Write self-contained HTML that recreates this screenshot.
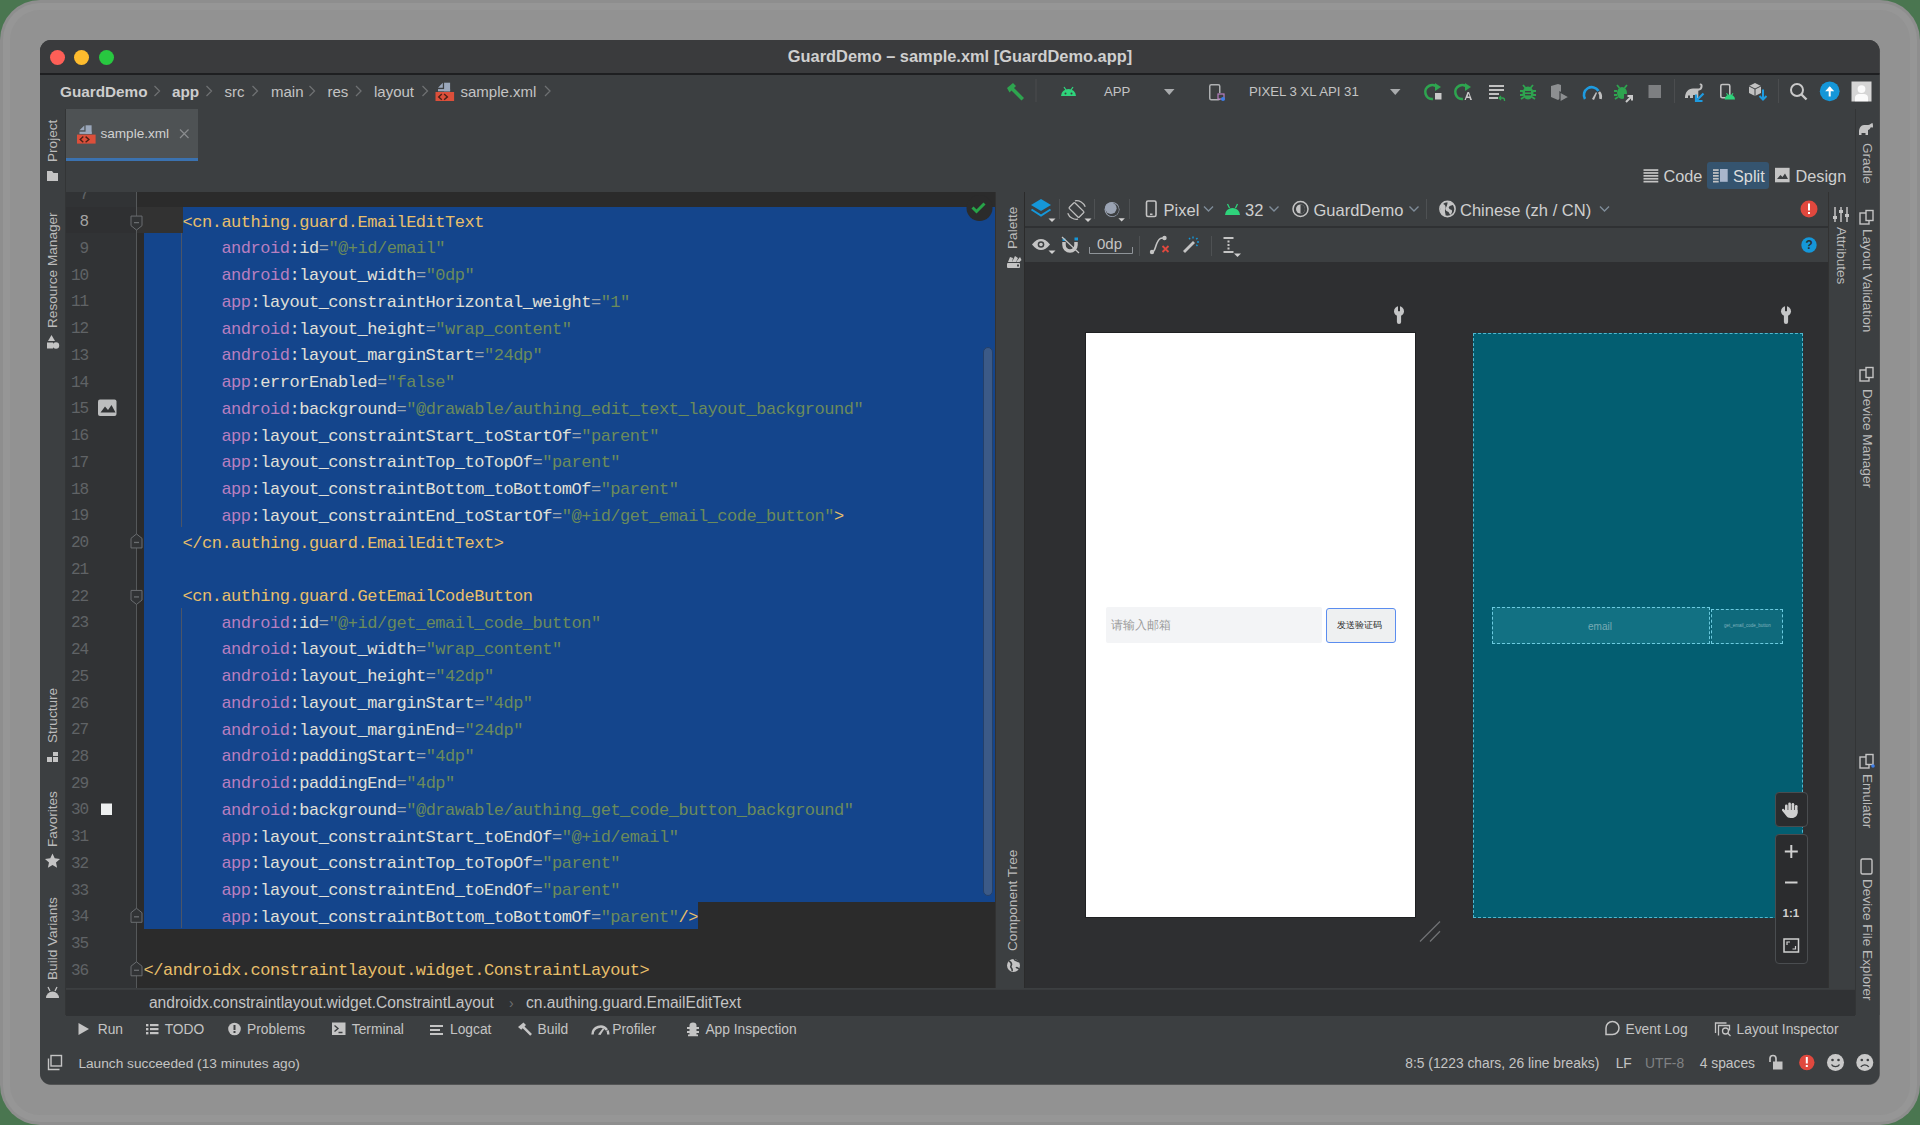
<!DOCTYPE html>
<html><head><meta charset="utf-8">
<style>
*{margin:0;padding:0;box-sizing:border-box}
html,body{width:1920px;height:1125px;overflow:hidden;background:#4a7650;font-family:"Liberation Sans",sans-serif}
.a{position:absolute}
.bgr{position:absolute}
#shadow{position:absolute;left:39.5px;top:39.5px;width:1840.5px;height:1045.5px;border-radius:11.5px;background:#6a6a6a}
#root{position:absolute;left:0;top:0;width:1920px;height:1125px;clip-path:inset(40px 40.5px 40.5px 40px round 11px);background:#3c3f41}
.t{position:absolute;white-space:nowrap;color:#bbbbbb;font-size:14px;line-height:1}
svg{position:absolute;overflow:visible}
#code{position:absolute;left:143.6px;top:183px;font-family:"Liberation Mono",monospace;font-size:17px;letter-spacing:-0.478px;color:#a9b7c6}
.ln{height:26.74px;line-height:26.74px;white-space:pre}
.tag{color:#e8bf6a}.ns{color:#b87fc0}.c{color:#e0e0d8}.at{color:#e0e0d8}.eq{color:#9aa3b0}.v{color:#6b8b5b}
.num{position:absolute;left:66px;width:21.8px;text-align:right;font-family:"Liberation Mono",monospace;font-size:16px;letter-spacing:-1.2px;color:#606366;line-height:26.74px}
.vt{position:absolute;white-space:nowrap;color:#bbbbbb;font-size:13px;line-height:1;transform-origin:0 0;transform:rotate(-90deg)}
</style></head>
<body>
<div class="bgr" style="left:0;top:0;width:1920px;height:1125px;border-radius:40px;background:#8e8e8e"></div>
<div class="bgr" style="left:3px;top:3px;width:1914px;height:1119px;border-radius:37px;background:#969696"></div>
<div class="bgr" style="left:10px;top:10px;width:1900px;height:1105px;border-radius:30px;background:#929292"></div>
<div id="shadow"></div>
<div id="root">
<!-- toolbar bg -->
<div class="a" style="left:40px;top:75px;width:1840px;height:34px;background:#3c3f41"></div>
<!-- left strip -->
<div class="a" style="left:40px;top:109px;width:26px;height:906px;background:#3c3f41"></div>
<div class="a" style="left:65px;top:109px;width:1px;height:906px;background:#333536"></div>
<!-- tab -->
<div class="a" style="left:66px;top:109px;width:132px;height:49px;background:#4e5254"></div>
<div class="a" style="left:66px;top:158px;width:132px;height:3px;background:#3b72b0"></div>
<!-- editor -->
<div class="a" style="left:66px;top:192px;width:929px;height:796px;background:#2b2b2b"></div>
<div class="a" style="left:66px;top:192px;width:70px;height:796px;background:#313335"></div>
<!-- current line -->
<div class="a" style="left:66px;top:206.7px;width:70px;height:26.74px;background:#2f3032"></div>
<div class="a" style="left:137px;top:206.7px;width:46px;height:26.74px;background:#323232"></div>
<!-- selection -->
<div class="a" style="left:183px;top:206.7px;width:812px;height:26.74px;background:#14458c"></div>
<div class="a" style="left:144px;top:233.44px;width:851px;height:668.5px;background:#14458c"></div>
<div class="a" style="left:144px;top:901.9px;width:554.4px;height:26.74px;background:#14458c"></div>
<!-- fold line -->
<div class="a" style="left:136px;top:192px;width:1px;height:796px;background:#55585a"></div>
<!-- indent guide -->
<div class="a" style="left:180.5px;top:233.4px;width:1px;height:294px;background:#4b5568"></div>
<div class="a" style="left:180.5px;top:608px;width:1px;height:320px;background:#4b5568"></div>
<div id="code"><div class="ln"></div><div class="ln">    <span class="tag">&lt;cn.authing.guard.EmailEditText</span></div><div class="ln">        <span class="ns">android</span><span class="c">:</span><span class="at">id</span><span class="eq">=</span><span class="v">&quot;@+id/email&quot;</span></div><div class="ln">        <span class="ns">android</span><span class="c">:</span><span class="at">layout_width</span><span class="eq">=</span><span class="v">&quot;0dp&quot;</span></div><div class="ln">        <span class="ns">app</span><span class="c">:</span><span class="at">layout_constraintHorizontal_weight</span><span class="eq">=</span><span class="v">&quot;1&quot;</span></div><div class="ln">        <span class="ns">android</span><span class="c">:</span><span class="at">layout_height</span><span class="eq">=</span><span class="v">&quot;wrap_content&quot;</span></div><div class="ln">        <span class="ns">android</span><span class="c">:</span><span class="at">layout_marginStart</span><span class="eq">=</span><span class="v">&quot;24dp&quot;</span></div><div class="ln">        <span class="ns">app</span><span class="c">:</span><span class="at">errorEnabled</span><span class="eq">=</span><span class="v">&quot;false&quot;</span></div><div class="ln">        <span class="ns">android</span><span class="c">:</span><span class="at">background</span><span class="eq">=</span><span class="v">&quot;@drawable/authing_edit_text_layout_background&quot;</span></div><div class="ln">        <span class="ns">app</span><span class="c">:</span><span class="at">layout_constraintStart_toStartOf</span><span class="eq">=</span><span class="v">&quot;parent&quot;</span></div><div class="ln">        <span class="ns">app</span><span class="c">:</span><span class="at">layout_constraintTop_toTopOf</span><span class="eq">=</span><span class="v">&quot;parent&quot;</span></div><div class="ln">        <span class="ns">app</span><span class="c">:</span><span class="at">layout_constraintBottom_toBottomOf</span><span class="eq">=</span><span class="v">&quot;parent&quot;</span></div><div class="ln">        <span class="ns">app</span><span class="c">:</span><span class="at">layout_constraintEnd_toStartOf</span><span class="eq">=</span><span class="v">&quot;@+id/get_email_code_button&quot;</span><span class="tag">&gt;</span></div><div class="ln">    <span class="tag">&lt;/cn.authing.guard.EmailEditText&gt;</span></div><div class="ln"></div><div class="ln">    <span class="tag">&lt;cn.authing.guard.GetEmailCodeButton</span></div><div class="ln">        <span class="ns">android</span><span class="c">:</span><span class="at">id</span><span class="eq">=</span><span class="v">&quot;@+id/get_email_code_button&quot;</span></div><div class="ln">        <span class="ns">android</span><span class="c">:</span><span class="at">layout_width</span><span class="eq">=</span><span class="v">&quot;wrap_content&quot;</span></div><div class="ln">        <span class="ns">android</span><span class="c">:</span><span class="at">layout_height</span><span class="eq">=</span><span class="v">&quot;42dp&quot;</span></div><div class="ln">        <span class="ns">android</span><span class="c">:</span><span class="at">layout_marginStart</span><span class="eq">=</span><span class="v">&quot;4dp&quot;</span></div><div class="ln">        <span class="ns">android</span><span class="c">:</span><span class="at">layout_marginEnd</span><span class="eq">=</span><span class="v">&quot;24dp&quot;</span></div><div class="ln">        <span class="ns">android</span><span class="c">:</span><span class="at">paddingStart</span><span class="eq">=</span><span class="v">&quot;4dp&quot;</span></div><div class="ln">        <span class="ns">android</span><span class="c">:</span><span class="at">paddingEnd</span><span class="eq">=</span><span class="v">&quot;4dp&quot;</span></div><div class="ln">        <span class="ns">android</span><span class="c">:</span><span class="at">background</span><span class="eq">=</span><span class="v">&quot;@drawable/authing_get_code_button_background&quot;</span></div><div class="ln">        <span class="ns">app</span><span class="c">:</span><span class="at">layout_constraintStart_toEndOf</span><span class="eq">=</span><span class="v">&quot;@+id/email&quot;</span></div><div class="ln">        <span class="ns">app</span><span class="c">:</span><span class="at">layout_constraintTop_toTopOf</span><span class="eq">=</span><span class="v">&quot;parent&quot;</span></div><div class="ln">        <span class="ns">app</span><span class="c">:</span><span class="at">layout_constraintEnd_toEndOf</span><span class="eq">=</span><span class="v">&quot;parent&quot;</span></div><div class="ln">        <span class="ns">app</span><span class="c">:</span><span class="at">layout_constraintBottom_toBottomOf</span><span class="eq">=</span><span class="v">&quot;parent&quot;</span><span class="tag">/&gt;</span></div><div class="ln"></div><div class="ln"><span class="tag">&lt;/androidx.constraintlayout.widget.ConstraintLayout&gt;</span></div></div>
<!-- palette strip -->
<div class="a" style="left:995px;top:192px;width:30px;height:796px;background:#3c3f41"></div>
<div class="a" style="left:995px;top:192px;width:1px;height:796px;background:#323232"></div>
<div class="a" style="left:1024px;top:192px;width:1px;height:796px;background:#2b2b2b"></div>
<!-- design panel -->
<div class="a" style="left:1025px;top:192px;width:803px;height:796px;background:#2e2f31"></div>
<div class="a" style="left:1025px;top:192px;width:803px;height:34px;background:#3c3f41"></div>
<div class="a" style="left:1025px;top:226px;width:803px;height:2px;background:#2f3133"></div>
<div class="a" style="left:1025px;top:228px;width:803px;height:34px;background:#3c3f41"></div>
<!-- attributes strip -->
<div class="a" style="left:1828px;top:192px;width:27px;height:796px;background:#3c3f41"></div>
<div class="a" style="left:1828px;top:192px;width:1px;height:796px;background:#323232"></div>
<!-- right strip -->
<div class="a" style="left:1855px;top:109px;width:25px;height:906px;background:#3c3f41"></div>
<div class="a" style="left:1855px;top:109px;width:1px;height:906px;background:#333536"></div>
<!-- bottom breadcrumb -->
<div class="a" style="left:66px;top:988.5px;width:1789px;height:27px;background:#303234"></div>
<div class="a" style="left:66px;top:988.5px;width:1789px;height:1px;background:#3a3c3e"></div>

<!-- title bar -->
<div class="a" style="left:40px;top:40px;width:1840px;height:34px;background:#3a3b3d"></div>
<div class="a" style="left:40px;top:73px;width:1840px;height:2px;background:#1e1f21"></div>
<div class="a" style="left:50px;top:50px;width:15px;height:15px;border-radius:50%;background:#fe5f57"></div>
<div class="a" style="left:74px;top:50px;width:15px;height:15px;border-radius:50%;background:#febc2e"></div>
<div class="a" style="left:99px;top:50px;width:15px;height:15px;border-radius:50%;background:#28c840"></div>
<div class="t" style="left:0;width:1920px;top:48px;text-align:center;font-size:16.4px;font-weight:bold;color:#cfcfcf">GuardDemo – sample.xml [GuardDemo.app]</div>
<!-- nav bar -->
<div class="t" style="left:60px;top:84px;font-size:15.3px;font-weight:bold;color:#cdcdcd">GuardDemo</div>
<div class="t" style="left:172px;top:84px;font-size:15.3px;font-weight:bold;color:#cdcdcd">app</div>
<div class="t" style="left:224.5px;top:84px;font-size:15px;color:#c4c4c4">src</div>
<div class="t" style="left:271px;top:84px;font-size:15px;color:#c4c4c4">main</div>
<div class="t" style="left:327.5px;top:84px;font-size:15px;color:#c4c4c4">res</div>
<div class="t" style="left:374px;top:84px;font-size:15px;color:#c4c4c4">layout</div>
<div class="t" style="left:460.5px;top:84px;font-size:15px;color:#c4c4c4">sample.xml</div>
<svg style="left:0;top:0" width="1" height="1">
 <g stroke="#6e7072" stroke-width="1.3" fill="none">
  <path d="M154.5 86l5 5-5 5M206.5 86l5 5-5 5M252.5 86l5 5-5 5M309.5 86l5 5-5 5M356 86l5 5-5 5M422.5 86l5 5-5 5M545 86l5 5-5 5"/>
 </g>
 <!-- xml file icon -->
 <g transform="translate(435.5,82.7)"><rect x="8.6" y="0" width="6" height="8.6" fill="#9aa7bb"/><rect x="2.5" y="6.4" width="12.1" height="2.2" fill="#9aa7bb"/><path d="M2.5 5L7.3 0.1V5z" fill="#9aa7bb"/><rect x="0" y="9.3" width="18.6" height="9" fill="#dc4f3a"/><path d="M6.3 11.3L3.2 14.2 6.3 17M8.6 11.3l3.3 2.9-3.3 2.8" stroke="#4a2218" stroke-width="1.4" fill="none"/></g>
</svg>
<!-- right toolbar icons -->
<svg style="left:0;top:0" width="1" height="1">
 <!-- hammer -->
 <g transform="translate(1006,82)"><path d="M1 6l6-5 3 3-2 2 10 10-2.5 2.5-10-10-2 2z" fill="#2ea44f"/></g>
 <rect x="1035.5" y="79" width="1" height="23" fill="#4b4d4f"/>
 <!-- android -->
 <g transform="translate(1061,84)"><path d="M0 12a7.5 7 0 0 1 15 0z" fill="#2fd37b"/><path d="M3 3l2 3M12 3l-2 3" stroke="#2fd37b" stroke-width="1.3"/><circle cx="4.5" cy="9.5" r="1" fill="#3c3f41"/><circle cx="10.5" cy="9.5" r="1" fill="#3c3f41"/></g>
 <path d="M1164 89h10.5l-5.25 6z" fill="#a9abad"/>
 <!-- device icon -->
 <g transform="translate(1209,84)"><rect x="0.75" y="0.75" width="10" height="15" rx="1.5" fill="none" stroke="#aeb0b2" stroke-width="1.5"/><rect x="8" y="9" width="7" height="6" fill="#3c3f41"/><rect x="9" y="10" width="6" height="5" fill="none" stroke="#b87fc0" stroke-width="1.2"/><circle cx="14" cy="15" r="2" fill="#3d7ee8"/></g>
 <path d="M1390 89h10.5l-5.25 6z" fill="#a9abad"/>
 <!-- rerun icons -->
 <g transform="translate(1425,82)"><path d="M13 6A7 7 0 1 0 8 17" stroke="#2ea44f" stroke-width="2.6" fill="none"/><path d="M10 1l6 4-6 4z" fill="#2ea44f"/><rect x="10" y="11" width="6.5" height="6.5" fill="#c9c9c9"/></g>
 <g transform="translate(1455,82)"><path d="M13 6A7 7 0 1 0 8 17" stroke="#2ea44f" stroke-width="2.6" fill="none"/><path d="M10 1l6 4-6 4z" fill="#2ea44f"/><path d="M9.5 18l3-8h1.5l3 8h-1.8l-.7-2h-3l-.7 2zM12.6 14.5h2l-1-3z" fill="#c9c9c9"/></g>
 <!-- apply changes list -->
 <g transform="translate(1489,85)" fill="#c1c1c1"><rect x="0" y="0" width="15" height="2"/><rect x="0" y="4" width="15" height="2"/><rect x="0" y="8" width="10" height="2"/><rect x="0" y="12" width="9" height="2"/><path d="M12 11l-2 2 2 2M10.5 13h3a2 2 0 0 1 2 2v1" stroke="#2ea44f" stroke-width="1.3" fill="none"/></g>
 <!-- debug bug -->
 <g transform="translate(1520,83)" fill="#2ea44f"><ellipse cx="8" cy="10" rx="5.5" ry="6.5"/><path d="M3 2l2.5 3M13 2l-2.5 3M0 8h3M13 8h3M0 12h3M13 12h3M1 16l3-2M15 16l-3-2" stroke="#2ea44f" stroke-width="1.8"/><rect x="5" y="8" width="6" height="1.4" fill="#3c3f41"/><rect x="5" y="11" width="6" height="1.4" fill="#3c3f41"/></g>
 <!-- shield play -->
 <g transform="translate(1551,84)"><path d="M0 2l7-2 3 1v13l-3 2-7-3z" fill="#8d8f91"/><path d="M9 8l9 5-9 5z" fill="#8d8f91" stroke="#3c3f41" stroke-width="1.2"/></g>
 <!-- profiler gauge -->
 <g transform="translate(1583,85)"><path d="M2 14A7.5 7.5 0 0 1 15.5 6" stroke="#1e9be0" stroke-width="2.6" fill="none"/><path d="M16 7a7.5 7.5 0 0 1 1.5 7" stroke="#bfbfbf" stroke-width="2.6" fill="none"/><path d="M9 14l4-7 1 1-3 7z" fill="#bfbfbf"/></g>
 <!-- attach debugger -->
 <g transform="translate(1615,83)" fill="#2ea44f"><ellipse cx="7" cy="10" rx="5" ry="6"/><path d="M2 2l2.5 3M12 2l-2.5 3M-1 8h3M-1 12h3M0 16l3-2" stroke="#2ea44f" stroke-width="1.8"/><path d="M9 11h9v9H9z" fill="#3c3f41"/><path d="M11 19l6-6M12.5 13H17v4.5" stroke="#c9c9c9" stroke-width="2" fill="none"/></g>
 <!-- stop -->
 <rect x="1648.5" y="85" width="12.5" height="13" fill="#7d7f81"/>
 <rect x="1674" y="79" width="1" height="24" fill="#4b4d4f"/>
 <!-- gradle sync -->
 <g transform="translate(1685,83)">
  <path d="M0.5 15.5c0-5 2.5-9 7-9.5 3-.3 5 .5 7 0 1.5-.4 2-1.5 2-3 0-1.2-1-1.6-1.6-1.2M0.5 15.5h3v-2.5h3v2.5h2.5v-3h3" fill="none" stroke="#c1c1c1" stroke-width="0"/>
  <path d="M0 15c0-5.5 3-9.5 8-9.5h5c1.6 0 2.6-1 2.6-2.6 0-.9-.6-1.4-1.2-1.1l.6-1.3c1.6-.4 2.6.8 2.6 2.4 0 2.8-1.8 4.6-4.3 4.8V15h-2.6v-3H8v3H5v-2.5H3V15z" fill="#c1c1c1"/>
  <path d="M18.5 10.5l-7 7M11 11.5v6.5h6.5" stroke="#1e9be0" stroke-width="2.2" fill="none"/>
 </g>
 <!-- device manager -->
 <g transform="translate(1720,83.7)"><rect x="0.8" y="0.8" width="9" height="13.2" rx="1.5" fill="none" stroke="#c1c1c1" stroke-width="1.6"/><path d="M4.7 15.8a5.15 5 0 0 1 10.3 0z" fill="#2fd37b" stroke="#3c3f41" stroke-width="0"/><path d="M6.5 9.5l1.2 1.8M13 9.5l-1.2 1.8" stroke="#2fd37b" stroke-width="1.1"/></g>
 <!-- sdk manager cube -->
 <g transform="translate(1749,83)"><path d="M6 0l6 3v7l-6 3-6-3V3z" fill="#c1c1c1"/><path d="M0 3l6 3 6-3M6 6v7" stroke="#3c3f41" stroke-width="1" fill="none"/><path d="M14 6.5v10M10.5 13l3.5 3.5 3.5-3.5" stroke="#1e9be0" stroke-width="2" fill="none"/></g>
 <rect x="1778" y="79" width="1" height="24" fill="#4b4d4f"/>
 <!-- search -->
 <g transform="translate(1790,83)"><circle cx="7" cy="7" r="6" stroke="#c9c9c9" stroke-width="2" fill="none"/><path d="M11.5 11.5l5 5" stroke="#c9c9c9" stroke-width="2.4"/></g>
 <!-- update -->
 <circle cx="1829.7" cy="91.3" r="9.9" fill="#1597d9"/>
 <path d="M1829.7 96.5v-9" stroke="#fff" stroke-width="2"/><path d="M1825.2 91.3l4.5-5 4.5 5z" fill="#fff"/>
 <!-- avatar -->
 <rect x="1851.5" y="81.5" width="20" height="20" fill="#d5d5d5"/>
 <circle cx="1861.5" cy="89.1" r="3.9" fill="#fafafa"/>
 <path d="M1855 101.2v-3.5c0-2.5 2-3.7 4-3.7h5c2 0 4 1.2 4 3.7v3.5z" fill="#fafafa"/>
</svg>
<div class="t" style="left:1104px;top:84.7px;font-size:13.2px;color:#c4c4c4">APP</div>
<div class="t" style="left:1249px;top:84.7px;font-size:13.2px;color:#c4c4c4">PIXEL 3 XL API 31</div>

<div class="num" style="top:182.46px;color:#606366">7</div>
<div class="num" style="top:209.20px;color:#a4a3a3">8</div>
<div class="num" style="top:235.94px;color:#606366">9</div>
<div class="num" style="top:262.68px;color:#606366">10</div>
<div class="num" style="top:289.42px;color:#606366">11</div>
<div class="num" style="top:316.16px;color:#606366">12</div>
<div class="num" style="top:342.90px;color:#606366">13</div>
<div class="num" style="top:369.64px;color:#606366">14</div>
<div class="num" style="top:396.38px;color:#606366">15</div>
<div class="num" style="top:423.12px;color:#606366">16</div>
<div class="num" style="top:449.86px;color:#606366">17</div>
<div class="num" style="top:476.60px;color:#606366">18</div>
<div class="num" style="top:503.34px;color:#606366">19</div>
<div class="num" style="top:530.08px;color:#606366">20</div>
<div class="num" style="top:556.82px;color:#606366">21</div>
<div class="num" style="top:583.56px;color:#606366">22</div>
<div class="num" style="top:610.30px;color:#606366">23</div>
<div class="num" style="top:637.04px;color:#606366">24</div>
<div class="num" style="top:663.78px;color:#606366">25</div>
<div class="num" style="top:690.52px;color:#606366">26</div>
<div class="num" style="top:717.26px;color:#606366">27</div>
<div class="num" style="top:744.00px;color:#606366">28</div>
<div class="num" style="top:770.74px;color:#606366">29</div>
<div class="num" style="top:797.48px;color:#606366">30</div>
<div class="num" style="top:824.22px;color:#606366">31</div>
<div class="num" style="top:850.96px;color:#606366">32</div>
<div class="num" style="top:877.70px;color:#606366">33</div>
<div class="num" style="top:904.44px;color:#606366">34</div>
<div class="num" style="top:931.18px;color:#606366">35</div>
<div class="num" style="top:957.92px;color:#606366">36</div>
<svg style="left:0;top:0" width="1" height="1">
<path d="M131 216.07h11v9.6l-5.5 4.4l-5.5 -4.4z" fill="#313335" stroke="#6a6d70" stroke-width="1"/><path d="M134 222.57h5" stroke="#6a6d70" stroke-width="1.3"/><path d="M131 547.9499999999999h11v-9.6l-5.5 -4.4l-5.5 4.4z" fill="#313335" stroke="#6a6d70" stroke-width="1"/><path d="M134 542.45h5" stroke="#6a6d70" stroke-width="1.3"/><path d="M131 590.43h11v9.6l-5.5 4.4l-5.5 -4.4z" fill="#313335" stroke="#6a6d70" stroke-width="1"/><path d="M134 596.93h5" stroke="#6a6d70" stroke-width="1.3"/><path d="M131 922.3100000000001h11v-9.6l-5.5 -4.4l-5.5 4.4z" fill="#313335" stroke="#6a6d70" stroke-width="1"/><path d="M134 916.81h5" stroke="#6a6d70" stroke-width="1.3"/><path d="M131 975.7899999999998h11v-9.6l-5.5 -4.4l-5.5 4.4z" fill="#313335" stroke="#6a6d70" stroke-width="1"/><path d="M134 970.29h5" stroke="#6a6d70" stroke-width="1.3"/>
<rect x="98" y="399.5" width="18.5" height="16.5" rx="2" fill="#bcbdbe"/><path d="M100.5 412.5l4.5-6 3 3.5 3.5-5 4 7.5z" fill="#313335"/>
<rect x="101" y="803.5" width="11" height="11.5" fill="#eef0f0"/>
<circle cx="979.5" cy="208" r="13" fill="#2b2b2b"/><path d="M972.5 207.5l4 4 8-8" stroke="#27a348" stroke-width="3" fill="none"/>
</svg>
<div class="a" style="left:982.7px;top:346.5px;width:10px;height:549.5px;border-radius:5px;background:#3c5a87;border:1px solid #24406a"></div><div class="a" style="left:66px;top:170px;width:80px;height:22px;background:#3c3f41"></div>

<!-- tab label -->
<svg style="left:0;top:0" width="1" height="1">
 <g transform="translate(77,125.3)"><rect x="8.6" y="0" width="6" height="8.6" fill="#9aa7bb"/><rect x="2.5" y="6.4" width="12.1" height="2.2" fill="#9aa7bb"/><path d="M2.5 5L7.3 0.1V5z" fill="#9aa7bb"/><rect x="0" y="9.3" width="18.6" height="9" fill="#dc4f3a"/><path d="M6.3 11.3L3.2 14.2 6.3 17M8.6 11.3l3.3 2.9-3.3 2.8" stroke="#4a2218" stroke-width="1.4" fill="none"/></g>
 <path d="M180 129.5l8.5 8.5M188.5 129.5l-8.5 8.5" stroke="#8a8c8e" stroke-width="1.2"/>
</svg>
<div class="t" style="left:100.4px;top:127.2px;font-size:13.6px;color:#d0d0d0">sample.xml</div>
<!-- Code / Split / Design -->
<div class="a" style="left:1707px;top:162px;width:62px;height:26.6px;border-radius:3px;background:#35546f"></div>
<svg style="left:0;top:0" width="1" height="1">
 <g fill="#c4c4c4"><rect x="1643.5" y="169.2" width="14.8" height="1.7"/><rect x="1643.5" y="172.1" width="14.8" height="1.7"/><rect x="1643.5" y="175" width="14.8" height="1.7"/><rect x="1643.5" y="177.9" width="14.8" height="1.7"/><rect x="1643.5" y="180.8" width="14.8" height="1.7"/></g>
 <g fill="#c4c4c4"><rect x="1713" y="169.2" width="5.7" height="1.7"/><rect x="1713" y="172.1" width="5.7" height="1.7"/><rect x="1713" y="175" width="5.7" height="1.7"/><rect x="1713" y="177.9" width="5.7" height="1.7"/><rect x="1713" y="180.8" width="5.7" height="1.7"/></g><rect x="1720" y="169" width="7.7" height="12.8" fill="#a9b6cc"/>
 <rect x="1775" y="167.8" width="14.6" height="14.5" fill="#c4c4c4"/>
 <path d="M1777 179l3.5-4 2 2 2.5-3.5 3 5.5z" fill="#3c3f41"/>
</svg>
<div class="t" style="left:1663.5px;top:167.7px;font-size:16.3px;color:#cfcfcf">Code</div>
<div class="t" style="left:1733px;top:167.7px;font-size:16.3px;color:#dcdcdc">Split</div>
<div class="t" style="left:1795.5px;top:167.7px;font-size:16.3px;color:#cfcfcf">Design</div>
<!-- left strip labels -->
<div class="vt" style="left:46px;top:162.2px;font-size:13.6px">Project</div>
<div class="vt" style="left:46px;top:327.7px;font-size:13.6px">Resource Manager</div>
<div class="vt" style="left:46px;top:743px;font-size:13.6px">Structure</div>
<div class="vt" style="left:46px;top:847px;font-size:13.6px">Favorites</div>
<div class="vt" style="left:46px;top:979.6px;font-size:13.6px">Build Variants</div>
<svg style="left:0;top:0" width="1" height="1">
 <path d="M47 171h5l1.5 2H58v8H47z" fill="#c4c4c4"/>
 <path d="M51.5 335l3.5 6h-7z" fill="#c4c4c4"/><rect x="47" y="342.5" width="6" height="6" fill="#c4c4c4"/><circle cx="56" cy="345.5" r="3.2" fill="#c4c4c4"/>
 <g fill="#c4c4c4"><rect x="47" y="757" width="5" height="5"/><rect x="53" y="752" width="5" height="4"/><rect x="53" y="757" width="5" height="5"/></g>
 <path d="M52.5 853.5l2.2 4.8 5.3.6-4 3.6 1.1 5.2-4.6-2.7-4.6 2.7 1.1-5.2-4-3.6 5.3-.6z" fill="#c4c4c4"/>
 <path d="M46 998a6.5 6.5 0 0 1 13 0z" fill="#c4c4c4"/><path d="M48 987l2 4M57 987l-2 4" stroke="#c4c4c4" stroke-width="1.3"/>
</svg>
<!-- palette strip labels -->
<div class="vt" style="left:1005.8px;top:248.7px;font-size:13.6px">Palette</div>
<div class="vt" style="left:1005.8px;top:951px;font-size:13.6px">Component Tree</div>
<svg style="left:0;top:0" width="1" height="1">
 <rect x="1007" y="263" width="13" height="5" rx="1" fill="#c4c4c4"/><rect x="1017" y="264.5" width="2" height="2" fill="#3c3f41"/>
 <path d="M1008 262l2-5 3 1-1 4zM1012 262l3-6 3 2-2 4zM1016 262l4-5 1.5 3-2 2z" fill="#c4c4c4"/>
 <circle cx="1013.5" cy="965.5" r="6.5" fill="#c4c4c4"/><path d="M1009 961c2 1 3 3 2 5s2 2 1 5M1014 959c1 2 4 2 5 3M1016 968c1-1 2 0 3 1" stroke="#3c3f41" stroke-width="1.6" fill="none"/>
</svg>
<!-- attributes strip -->
<div class="vt" style="left:1848px;top:227px;font-size:13.6px;transform:rotate(90deg)">Attributes</div>
<svg style="left:0;top:0" width="1" height="1">
 <g stroke="#c4c4c4" stroke-width="1.5"><path d="M1835 207v15M1841 207v15M1847 207v15"/></g>
 <g fill="#c4c4c4"><rect x="1833" y="216" width="4" height="3"/><rect x="1839" y="210" width="4" height="3"/><rect x="1845" y="214" width="4" height="3"/></g>
</svg>
<!-- right strip labels -->
<div class="vt" style="left:1874px;top:143px;font-size:13.6px;transform:rotate(90deg)">Gradle</div>
<div class="vt" style="left:1874px;top:228.8px;font-size:13.6px;transform:rotate(90deg)">Layout Validation</div>
<div class="vt" style="left:1874px;top:389px;font-size:13.6px;transform:rotate(90deg)">Device Manager</div>
<div class="vt" style="left:1874px;top:774px;font-size:13.6px;transform:rotate(90deg)">Emulator</div>
<div class="vt" style="left:1874px;top:878.6px;font-size:13.6px;transform:rotate(90deg)">Device File Explorer</div>
<svg style="left:0;top:0" width="1" height="1">
 <path d="M1873 123c-2 0-3 2-5 2h-4c-3 0-5 3-5 7v3h2.5v-2h4v2h2.5v-5c1 0 2-1 3-3 1 1 2 1 2-1 0-1-0.5-3-0.1-3z" fill="#c4c4c4"/>
 <g fill="none" stroke="#c4c4c4" stroke-width="1.4"><rect x="1860" y="213" width="9" height="11"/><rect x="1866" y="210.5" width="7" height="10" fill="#3c3f41"/>
 <rect x="1860" y="370" width="9" height="11"/><rect x="1866" y="367.5" width="7" height="10" fill="#3c3f41"/>
 <rect x="1860" y="757" width="9" height="11"/><rect x="1866" y="754.5" width="7" height="10" fill="#3c3f41"/>
 <rect x="1861" y="859" width="11" height="15" rx="1.5"/></g>
 <circle cx="1873" cy="766" r="1.8" fill="#3d7ee8"/>
</svg>
<!-- bottom breadcrumb -->
<div class="t" style="left:148.9px;top:994.7px;font-size:15.6px;color:#c4c4c4">androidx.constraintlayout.widget.ConstraintLayout</div>
<div class="t" style="left:509px;top:995.5px;font-size:14px;color:#6e7072">›</div>
<div class="t" style="left:526px;top:994.7px;font-size:15.6px;color:#c4c4c4">cn.authing.guard.EmailEditText</div>
<!-- tool window bar -->
<div class="t" style="left:97.7px;top:1023px;font-size:13.8px;color:#c4c4c4">Run</div>
<div class="t" style="left:164.7px;top:1023px;font-size:13.8px;color:#c4c4c4">TODO</div>
<div class="t" style="left:247px;top:1023px;font-size:13.8px;color:#c4c4c4">Problems</div>
<div class="t" style="left:351.8px;top:1023px;font-size:13.8px;color:#c4c4c4">Terminal</div>
<div class="t" style="left:450px;top:1023px;font-size:13.8px;color:#c4c4c4">Logcat</div>
<div class="t" style="left:537.5px;top:1023px;font-size:13.8px;color:#c4c4c4">Build</div>
<div class="t" style="left:612.3px;top:1023px;font-size:13.8px;color:#c4c4c4">Profiler</div>
<div class="t" style="left:705.4px;top:1023px;font-size:13.8px;color:#c4c4c4">App Inspection</div>
<div class="t" style="left:1625.5px;top:1023px;font-size:13.8px;color:#c4c4c4">Event Log</div>
<div class="t" style="left:1736.6px;top:1023px;font-size:13.8px;color:#c4c4c4">Layout Inspector</div>
<svg style="left:0;top:0" width="1" height="1">
 <path d="M78.5 1023l10.5 6-10.5 6z" fill="#c4c4c4"/>
 <g fill="#c4c4c4"><rect x="146" y="1024" width="2.4" height="2.4"/><rect x="146" y="1028" width="2.4" height="2.4"/><rect x="146" y="1032" width="2.4" height="2.4"/><rect x="150" y="1024" width="8.5" height="2.2"/><rect x="150" y="1028" width="8.5" height="2.2"/><rect x="150" y="1032" width="8.5" height="2.2"/></g>
 <circle cx="234.5" cy="1029" r="6.3" fill="#c4c4c4"/><rect x="233.5" y="1025" width="2" height="5" fill="#3c3f41"/><rect x="233.5" y="1031" width="2" height="2" fill="#3c3f41"/>
 <rect x="332" y="1022.5" width="13.5" height="12.5" fill="#c4c4c4"/><path d="M334.5 1025.5l3.5 3-3.5 3M338.5 1032.5h4" stroke="#3c3f41" stroke-width="1.4" fill="none"/>
 <g fill="#c4c4c4"><rect x="430" y="1025" width="13" height="2"/><rect x="430" y="1029" width="10" height="2"/><rect x="430" y="1033" width="13" height="2"/></g>
 <path d="M518 1027l5.5-4.5 2.5 2.5-1.5 1.5 7.5 7.5-1.8 1.8-7.5-7.5-1.5 1.5z" fill="#c4c4c4"/>
 <path d="M592.5 1034.5a8 8 0 0 1 14.5-4.5M606 1027.5" stroke="#c4c4c4" stroke-width="2.4" fill="none"/><path d="M607.5 1030.5a8 8 0 0 1 0.8 4" stroke="#c4c4c4" stroke-width="2.4" fill="none"/><path d="M598 1034.5l5-6.5 1.3.9-3.8 6.1z" fill="#c4c4c4"/>
 <path d="M689.5 1025.5a3.5 3 0 0 1 7 0v1.5h2.5v2h-2.5v2h2.5v2h-2.5v1.5h1.5v1.8h-10v-1.8h1.5V1033h-2.5v-2h2.5v-2h-2.5v-2h2.5z" fill="#c4c4c4"/>
 <path d="M1612.5 1034.5h-6.5v-6.5a6.5 6.5 0 1 1 6.5 6.5z" fill="none" stroke="#c4c4c4" stroke-width="1.5"/>
 <g fill="none" stroke="#c4c4c4" stroke-width="1.3"><path d="M1715.5 1033v-10h11"/><path d="M1718.5 1035.5v-10h11v5"/><circle cx="1725.5" cy="1031" r="3"/><path d="M1727.5 1033l3 3"/></g>
</svg>
<!-- status bar -->
<svg style="left:0;top:0" width="1" height="1">
 <g fill="none" stroke="#c4c4c4" stroke-width="1.4"><rect x="51" y="1055.5" width="10.5" height="10.5"/><path d="M48.5 1058.5v11h11"/></g>
 <path d="M1770 1062v-3.5a3 3 0 0 1 6 0v4" stroke="#c4c4c4" stroke-width="1.7" fill="none"/><rect x="1773" y="1061.5" width="9.5" height="8" fill="#c4c4c4"/>
 <circle cx="1806.8" cy="1062.5" r="7.7" fill="#e0483e"/><rect x="1805.8" y="1057" width="2" height="6.5" fill="#fff"/><rect x="1805.8" y="1065" width="2" height="2" fill="#fff"/>
 <circle cx="1835.5" cy="1062.5" r="8.5" fill="#c9c9c9"/><circle cx="1832.5" cy="1060" r="1.3" fill="#3c3f41"/><circle cx="1838.5" cy="1060" r="1.3" fill="#3c3f41"/><path d="M1831.5 1064.5a4.5 4 0 0 0 8 0" stroke="#3c3f41" stroke-width="1.4" fill="none"/>
 <circle cx="1864.8" cy="1062.5" r="8.5" fill="#c9c9c9"/><circle cx="1861.8" cy="1060" r="1.3" fill="#3c3f41"/><circle cx="1867.8" cy="1060" r="1.3" fill="#3c3f41"/><path d="M1860.8 1067a4.5 4 0 0 1 8 0" stroke="#3c3f41" stroke-width="1.4" fill="none"/>
</svg>
<div class="t" style="left:78.4px;top:1057.4px;font-size:13.7px;color:#c4c4c4">Launch succeeded (13 minutes ago)</div>
<div class="t" style="left:1405.3px;top:1057.2px;font-size:13.8px;color:#c4c4c4">8:5 (1223 chars, 26 line breaks)</div>
<div class="t" style="left:1615.7px;top:1057.2px;font-size:13.8px;color:#c4c4c4">LF</div>
<div class="t" style="left:1645px;top:1057.2px;font-size:13.8px;color:#808284">UTF-8</div>
<div class="t" style="left:1699.8px;top:1057.2px;font-size:13.8px;color:#c4c4c4">4 spaces</div>

<svg style="left:0;top:0" width="1" height="1">
 <!-- toolbar 1 -->
 <path d="M1041 199l10 6-10 6-10-6z" fill="#1597d9"/>
 <path d="M1031.5 209.5l9.5 6 9.5-6" stroke="#1597d9" stroke-width="2" fill="none"/>
 <path d="M1048.5 218.5h7l-3.5 3.5z" fill="#d0d0d0"/>
 <rect x="1059" y="199" width="1" height="20" fill="#4e5153"/>
 <g fill="none" stroke="#bdbdbd" stroke-width="1.3"><rect x="1072.5" y="203" width="8" height="14" rx="1" transform="rotate(-45 1076.5 210)"/><path d="M1074.89 200.84A9.3 9.3 0 0 1 1085.24 206.82M1078.11 219.16A9.3 9.3 0 0 1 1067.76 213.18"/></g>
 <path d="M1084.5 218.5h7l-3.5 3.5z" fill="#d0d0d0"/>
 <rect x="1094" y="199" width="1" height="20" fill="#4e5153"/>
 <circle cx="1112" cy="209.4" r="7.5" fill="#9aa3b3"/><circle cx="1112.3" cy="209.7" r="6.6" fill="#3c3f41"/><circle cx="1110.9" cy="208.3" r="5.7" fill="#9aa3b3"/>
 <path d="M1118.4 218.2h6.5l-3.25 3.2z" fill="#d0d0d0"/>
 <rect x="1129" y="199" width="1" height="20" fill="#4e5153"/>
 <rect x="1146.5" y="201" width="9.5" height="15.5" rx="1.5" fill="none" stroke="#c4c4c4" stroke-width="1.6"/><rect x="1148" y="203" width="6.5" height="10" fill="#3c3f41"/><rect x="1150" y="213.5" width="2.5" height="1.5" fill="#c4c4c4"/>
 <path d="M1204 206.5l4.5 4.5 4.5-4.5" stroke="#7f8c99" stroke-width="1.4" fill="none"/>
 <path d="M1225 215a7.5 7 0 0 1 15 0z" fill="#2fd37b"/><path d="M1227.5 204l2 4M1237.5 204l-2 4" stroke="#2fd37b" stroke-width="1.3"/>
 <path d="M1269.5 206.5l4.5 4.5 4.5-4.5" stroke="#7f8c99" stroke-width="1.4" fill="none"/>
 <circle cx="1300.5" cy="209" r="7.5" fill="none" stroke="#c4c4c4" stroke-width="1.5"/><circle cx="1300.5" cy="209" r="4.5" fill="#c4c4c4"/><path d="M1300.5 204.5v9a4.5 4.5 0 0 0 0-9z" fill="#3c3f41"/>
 <path d="M1409.5 206.5l4.5 4.5 4.5-4.5" stroke="#7f8c99" stroke-width="1.4" fill="none"/>
 <rect x="1426" y="199" width="1" height="20" fill="#4e5153"/>
 <circle cx="1447.5" cy="209" r="7.6" fill="#3c3f41" stroke="#c4c4c4" stroke-width="1.6"/><path d="M1441 204.5c2.5-1 4 0 4.5 2s-1 3.5-.5 5.5 1 3.5 0 4.5c-2.5-1-4.5-3.5-4.5-6.5 0-2 .2-4 .5-5.5zM1447.5 201.8c2.5 0 4.5 1 6 2.8-1.5 1.2-3.5.8-4.5 2.2s1 3 2.8 3.2c.8 2-.5 4-1.5 5-1-1-1.2-3-2.8-3.5s-2.5-2-1.5-4 1.5-2.5 1.5-5.7z" fill="#c4c4c4"/>
 <path d="M1600 206.5l4.5 4.5 4.5-4.5" stroke="#7f8c99" stroke-width="1.4" fill="none"/>
 <circle cx="1809" cy="209" r="8.5" fill="#e0483e"/><rect x="1808" y="203.5" width="2" height="7" fill="#fff"/><rect x="1808" y="212" width="2" height="2" fill="#fff"/>
 <!-- toolbar 2 -->
 <path d="M1032 244.5c3-4 6-5.5 9-5.5s6 1.5 9 5.5c-3 4-6 5.5-9 5.5s-6-1.5-9-5.5z" fill="#c4c4c4"/><circle cx="1041" cy="244.5" r="3.3" fill="#3c3f41"/><circle cx="1041" cy="244.5" r="1.8" fill="#c4c4c4"/>
 <path d="M1048.5 250.5h7l-3.5 3.5z" fill="#d0d0d0"/>
 <path d="M1064 242v3a6 6 0 0 0 12 0v-3" stroke="#c4c4c4" stroke-width="3.5" fill="none"/><rect x="1074.5" y="237.5" width="3.5" height="3" fill="#1597d9"/><rect x="1062.5" y="238.5" width="3" height="2.5" fill="#1597d9"/><path d="M1062 237l17 16" stroke="#c4c4c4" stroke-width="1.2"/>
 <path d="M1089.5 247v6.5h43v-6.5" stroke="#8f9499" stroke-width="1" fill="none"/>
 <rect x="1139" y="236" width="1" height="20" fill="#4e5153"/>
 <path d="M1152 252c3 0 3-5 5-9s3-5 6-5" stroke="#c4c4c4" stroke-width="1.6" fill="none"/><circle cx="1152" cy="252" r="2.2" fill="#c4c4c4"/><circle cx="1164.5" cy="238" r="2.2" fill="#c4c4c4"/>
 <path d="M1162.5 246l6 6M1168.5 246l-6 6" stroke="#e0483e" stroke-width="1.8"/>
 <path d="M1184 252l10-10" stroke="#c4c4c4" stroke-width="2.8"/><g stroke="#1597d9" stroke-width="1.4"><path d="M1193 236.5v2M1199 242h-2M1197.5 238l-1.3 1.3M1197.5 246l-1.2-1.2M1189 238l1.2 1.2"/></g>
 <rect x="1211" y="236" width="1" height="20" fill="#4e5153"/>
 <g fill="#c4c4c4"><rect x="1223.5" y="237" width="10" height="2"/><rect x="1223.5" y="251" width="10" height="2"/><rect x="1227.5" y="240.5" width="2" height="2"/><rect x="1227.5" y="244" width="2" height="2"/><rect x="1227.5" y="247.5" width="2" height="2"/></g>
 <path d="M1234 253.5h7l-3.5 3.5z" fill="#d0d0d0"/>
 <circle cx="1809" cy="245" r="7.7" fill="#1597d9"/>
 <!-- wrenches -->
 <g fill="#c4c5c6"><circle cx="1399" cy="311.2" r="5"/><rect x="1396.9" y="313" width="4.2" height="11" rx="2.1"/></g><rect x="1398" y="305" width="2" height="6.2" fill="#2e2f31"/>
 <g fill="#c4c5c6"><circle cx="1786" cy="311.2" r="5"/><rect x="1783.9" y="313" width="4.2" height="11" rx="2.1"/></g><rect x="1785" y="305" width="2" height="6.2" fill="#2e2f31"/>
 <!-- resize handle -->
 <path d="M1420 941.5l20-20M1430 941.5l10-10.3" stroke="#707274" stroke-width="1.3"/>
</svg>
<div class="t" style="left:1163.6px;top:201.8px;font-size:16.5px;color:#cfcfcf">Pixel</div>
<div class="t" style="left:1245px;top:201.8px;font-size:16.5px;color:#cfcfcf">32</div>
<div class="t" style="left:1313.5px;top:201.8px;font-size:16.5px;color:#cfcfcf">GuardDemo</div>
<div class="t" style="left:1460px;top:201.8px;font-size:16.5px;color:#cfcfcf">Chinese (zh / CN)</div>
<div class="t" style="left:1097px;top:236.3px;font-size:15px;color:#c4c4c4">0dp</div>
<div class="t" style="left:1805.5px;top:238.5px;font-size:12px;font-weight:bold;color:#263238">?</div>
<!-- phone preview -->
<div class="a" style="left:1085.3px;top:332.2px;width:331px;height:586px;background:#1f2022"></div>
<div class="a" style="left:1086.3px;top:333.2px;width:329px;height:584px;background:#ffffff"></div>
<div class="a" style="left:1106px;top:607.3px;width:216px;height:36px;border-radius:2px;background:#f3f4f6"></div>
<div class="t" style="left:1110.5px;top:619px;font-size:12.4px;color:#9c9c9c">请输入邮箱</div>
<div class="a" style="left:1325.7px;top:608px;width:70.5px;height:34.5px;border-radius:3px;background:#eef0f1;border:1.5px solid #5b8def"></div>
<div class="t" style="left:1337.2px;top:621.3px;font-size:9.2px;color:#2a2a2a">发送验证码</div>
<!-- blueprint -->
<div class="a" style="left:1473px;top:333.2px;width:329.5px;height:585px;background:#035e71;border:1px dashed #4fb8d0"></div>
<div class="a" style="left:1492.3px;top:606.9px;width:217.6px;height:37.3px;background:#127183;border:1px dashed #6ccbe0"></div>
<div class="t" style="left:1588px;top:622px;font-size:10px;color:#78abb4">email</div>
<div class="a" style="left:1711.4px;top:608.7px;width:72px;height:35.5px;background:#0f6a7c;border:1px dashed #6ccbe0"></div>
<div class="t" style="left:1724px;top:623.5px;font-size:4.5px;color:#7fb3bc">get_email_code_button</div>
<!-- zoom controls -->
<div class="a" style="left:1774.8px;top:792px;width:33px;height:35px;border-radius:4px;background:#2b2c2e;border:1px solid #4a4d50"></div>
<div class="a" style="left:1774.8px;top:833.8px;width:33px;height:130px;border-radius:4px;background:#2b2c2e;border:1px solid #4a4d50"></div>
<svg style="left:0;top:0" width="1" height="1">
 <g fill="#d0d0d0"><rect x="1785" y="804.5" width="2.6" height="9" rx="1.3"/><rect x="1788.3" y="802.5" width="2.6" height="10" rx="1.3"/><rect x="1791.6" y="803" width="2.6" height="10" rx="1.3"/><rect x="1794.9" y="805" width="2.6" height="9" rx="1.3"/><path d="M1785 810h12.5v2.5c0 3.2-2.3 5.5-5.5 5.5h-1.5c-2 0-3.2-.8-4.3-2.2l-4-5c-.9-1.2.6-2.6 1.7-1.6l1.1 1z"/></g>
 <path d="M1791.3 845v13M1784.8 851.5h13" stroke="#d0d0d0" stroke-width="2"/>
 <path d="M1785 882.5h12.5" stroke="#d0d0d0" stroke-width="2"/>
 <rect x="1784" y="939" width="14.5" height="13" fill="none" stroke="#d0d0d0" stroke-width="1.5"/>
 <path d="M1787 945v-3h3M1795.5 946v3h-3" stroke="#d0d0d0" stroke-width="1.2" fill="none"/>
</svg>
<div class="t" style="left:1782.5px;top:908px;font-size:11.5px;font-weight:bold;color:#d0d0d0">1:1</div>

</div>
</body></html>
